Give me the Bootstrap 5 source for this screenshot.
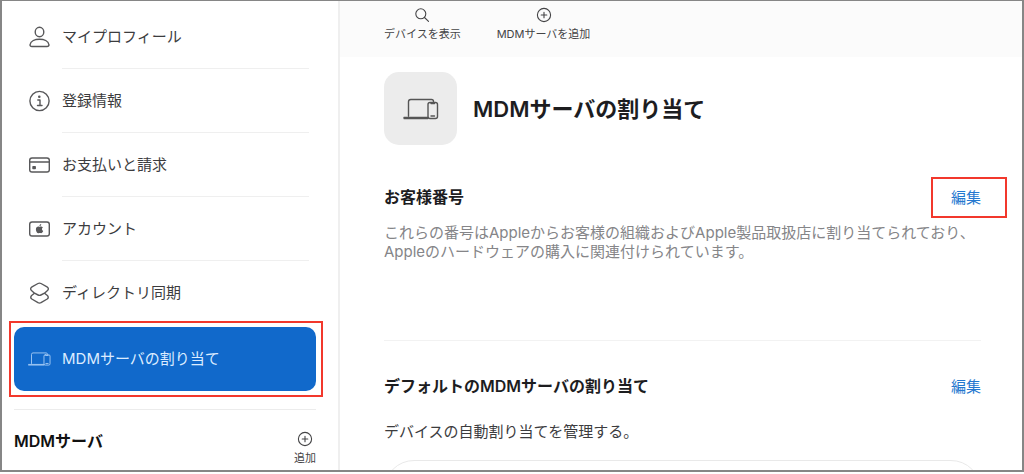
<!DOCTYPE html>
<html lang="ja">
<head>
<meta charset="utf-8">
<meta name="viewport" content="width=device-width, initial-scale=1">
<title>MDMサーバの割り当て</title>
<link href="https://cdn.jsdelivr.net/npm/bootstrap@5.3.0/dist/css/bootstrap.min.css" rel="stylesheet">
<style>
  body { font-family: Inter, "Noto Sans CJK JP", sans-serif; font-size: 15px; line-height: 19px; color: #3c3c3e; background: #fff; }
  .frame { height: calc(100vh - 2px); border: 1px solid #868686; border-left-width: 2px; border-right-width: 2px; border-bottom-width: 2px; }
  svg { fill: none; stroke: currentColor; stroke-width: 1.4; stroke-linejoin: round; stroke-linecap: round; flex: none; }
  .sidebar { width: 338px; flex: none; border-right: 2px solid #efefef; padding: 4px 22px 0 12px; }
  .side-link { height: 64px; padding-left: 14px; gap: 11px; color: #3c3c3e; text-decoration: none; }
  .side-link svg { width: 23px; height: 24px; color: #58585a; }
  .side-link .label { align-self: stretch; margin-right: 7px; border-bottom: 1px solid #efefef; }
  .side-link.last .label, .side-link.active .label { border-color: transparent; }
  .side-link.active { position: relative; margin-top: 2px; background: #1169cb; color: #dcecff; border-radius: 10px; }
  .side-link.active svg { color: #a9cdf5; }
  .marked { position: relative; }
  .marked::after { content: ""; position: absolute; border: 2px solid #f2382c; pointer-events: none; }
  .side-link.marked::after { inset: -6px -7px -6px -5px; }
  .edit.marked::after { inset: -11px -26px -11px -20px; }
  .servers { margin-top: 18px; padding-top: 21px; border-top: 1px solid #ececec; }
  .servers h2 { font-size: 16px; line-height: 20px; font-weight: 600; color: #111; }
  .tool { border: 0; background: none; padding: 0; font-size: 11px; line-height: 16px; color: #444446; }
  .tool svg { width: 16px; height: 16px; display: block; margin: 0 auto 3px; stroke-width: 1.1; }
  .toolbar { height: 56px; padding: 6px 44px 0; gap: 36px; background: #fbfbfb; }
  .content { padding: 15px 41px 0 44px; }
  .hero { width: 73px; height: 73px; border-radius: 15px; background: #ececec; color: #555; }
  .hero svg { width: 36px; height: 22px; }
  h1 { font-size: 22px; line-height: 30px; font-weight: 600; color: #1d1d1f; }
  .section-title { font-size: 16px; line-height: 20px; font-weight: 600; color: #1d1d1f; }
  .edit { border: 0; background: none; padding: 0; color: #2478cf; }
  .customer { margin-top: 42px; padding-bottom: 79px; border-bottom: 1px solid #f2f2f2; }
  .customer p { margin-top: 16px; color: #858588; }
  .defaults { padding-top: 35px; }
  .defaults p { margin: 26px 0 19px; }
  .panel { height: 120px; border: 1px solid #e9e9e9; border-radius: 30px; }
</style>
</head>
<body class="overflow-hidden">
<svg class="d-none">
  <symbol id="devices" viewBox="0 0 36 22">
    <path d="M5.5 18V3.8Q5.5 1.5 7.8 1.5H28.500Q30.500 1.500 30.500 3.500M1 19.500H25M1 20.500H25"/>
    <rect x="25" y="4.500" width="9.500" height="16" rx="2"/>
    <path d="M28 5.500H31.500M28 18H31.500"/>
  </symbol>
  <symbol id="plus" viewBox="0 0 16 16"><circle cx="8" cy="8" r="6.600"/><path d="M8 5.200V10.800M5.200 8H10.800"/></symbol>
</svg>
<div class="frame d-flex overflow-hidden">
  <aside class="sidebar">
    <nav class="d-flex flex-column">
      <a class="side-link d-flex align-items-center" href="#">
        <svg viewBox="0 0 23 24"><ellipse cx="11.500" cy="7" rx="4.300" ry="4.800"/><path d="M4 21.500Q2 21.500 2 19.800C2.500 16 7 14.200 11.500 14.200S20.500 16 21 19.800Q21 21.500 19 21.500Z"/></svg>
        <span class="label flex-fill d-flex align-items-center">マイプロフィール</span></a>
      <a class="side-link d-flex align-items-center" href="#">
        <svg viewBox="0 0 23 24"><circle cx="11.500" cy="12" r="9.600"/><circle cx="11.300" cy="7.800" r=".6" fill="currentColor"/><path d="M9.800 11H12V16.500M9.500 16.500H14"/></svg>
        <span class="label flex-fill d-flex align-items-center">登録情報</span></a>
      <a class="side-link d-flex align-items-center" href="#">
        <svg viewBox="0 0 23 24"><rect x="1.700" y="5" width="19.600" height="14" rx="2.300"/><path d="M2 9H21"/><rect x="5" y="13.800" width="2.200" height="1.800" fill="currentColor"/></svg>
        <span class="label flex-fill d-flex align-items-center">お支払いと請求</span></a>
      <a class="side-link d-flex align-items-center" href="#">
        <svg viewBox="0 0 23 24"><rect x="1.700" y="5" width="19.600" height="14" rx="2.300"/><path stroke="none" fill="currentColor" d="M11.600 9.900C12.500 9.500 13.900 9.200 14.900 10.500C13.500 11.500 13.700 13.200 15.200 13.900C14.600 15.200 13.900 16.300 13 16.200C12.400 15.900 11.500 15.800 10.700 16.200C9.200 16.600 7.900 14.200 7.900 12.400C7.900 10 9.900 9.100 11.600 9.900ZM11.500 9.200C11.300 8.200 12.100 7.100 13.200 7C13.300 8.100 12.600 9.100 11.500 9.200Z"/></svg>
        <span class="label flex-fill d-flex align-items-center">アカウント</span></a>
      <a class="side-link last d-flex align-items-center" href="#">
        <svg viewBox="0 0 23 24"><path d="M10 2.500Q11.500 1.700 13 2.500L19 5.800Q21.200 7.200 19.800 9.200L16.500 12.200L12.900 14Q11.500 14.700 10.100 14L6.500 12.200L3.200 9.200Q1.800 7.200 4 5.800ZM6.500 12.200L3.600 14.500Q1.800 16.500 3.800 18L10 21.700Q11.500 22.500 13 21.700L19.200 18Q21.200 16.500 19.400 14.500L16.500 12.200"/></svg>
        <span class="label flex-fill d-flex align-items-center">ディレクトリ同期</span></a>
      <a class="side-link active marked d-flex align-items-center" href="#" aria-current="page">
        <svg><use href="#devices"/></svg>
        <span class="label flex-fill d-flex align-items-center">MDMサーバの割り当て</span></a>
    </nav>
    <div class="servers d-flex justify-content-between align-items-start">
      <h2 class="mb-0">MDMサーバ</h2>
      <button class="tool" type="button"><svg><use href="#plus"/></svg>追加</button>
    </div>
  </aside>
  <main class="flex-fill">
    <div class="toolbar d-flex align-items-start">
      <button class="tool" type="button"><svg viewBox="0 0 16 16"><circle cx="6.800" cy="6.800" r="5"/><path d="M10.500 10.500L14.500 14.300"/></svg>デバイスを表示</button>
      <button class="tool" type="button"><svg><use href="#plus"/></svg>MDMサーバを追加</button>
    </div>
    <div class="content">
      <div class="d-flex align-items-center">
        <div class="hero d-flex align-items-center justify-content-center"><svg><use href="#devices"/></svg></div>
        <h1 class="mb-0 ms-3">MDMサーバの割り当て</h1>
      </div>
      <section class="customer">
        <div class="d-flex justify-content-between align-items-center">
          <h2 class="section-title mb-0">お客様番号</h2>
          <button class="edit marked" type="button">編集</button>
        </div>
        <p class="mb-0">これらの番号はAppleからお客様の組織およびApple製品取扱店に割り当てられており、Appleのハードウェアの購入に関連付けられています。</p>
      </section>
      <section class="defaults">
        <div class="d-flex justify-content-between align-items-center">
          <h2 class="section-title mb-0">デフォルトのMDMサーバの割り当て</h2>
          <button class="edit" type="button">編集</button>
        </div>
        <p>デバイスの自動割り当てを管理する。</p>
        <div class="panel"></div>
      </section>
    </div>
  </main>
</div>
<script src="https://cdn.jsdelivr.net/npm/bootstrap@5.3.0/dist/js/bootstrap.bundle.min.js"></script>
</body>
</html>
